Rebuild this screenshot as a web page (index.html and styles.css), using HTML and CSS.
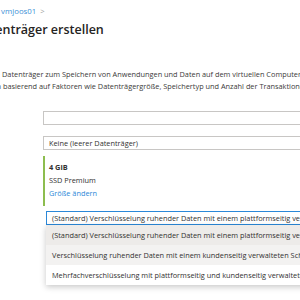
FILE: index.html
```
<html>
<head>
    <meta charset="utf-8">
    <link rel="stylesheet" href="styles.css">
</head>
<body>
    <div class="page">
        <div class="crumbs">
            <span class="crumb-hidden">Startseite <span class="chev">&gt;</span> </span><a class="crumb">vmjoos01</a> <span class="chev">&gt;</span>
        </div>
        <h1 class="title">Datenträger erstellen</h1>

        <p class="desc line1">Datenträger zum Speichern von Anwendungen und Daten auf dem virtuellen Computer verwenden.</p>
        <p class="desc line2">Die Kosten variieren basierend auf Faktoren wie Datenträgergröße, Speichertyp und Anzahl der Transaktionen.</p>

        <div class="form">
            <div class="field"></div>
            <div class="field select">Keine (leerer Datenträger)</div>

            <div class="size">
                <div class="size-value">4 GiB</div>
                <div class="size-type">SSD Premium</div>
                <a class="size-link">Größe ändern</a>
            </div>

            <div class="dropdown">
                <div class="dropdown-box">(Standard) Verschlüsselung ruhender Daten mit einem plattformseitig verwalteten Schlüssel</div>
                <ul class="dropdown-list">
                    <li class="option selected">(Standard) Verschlüsselung ruhender Daten mit einem plattformseitig verwalteten Schlüssel</li>
                    <li class="option hover">Verschlüsselung ruhender Daten mit einem kundenseitig verwalteten Schlüssel</li>
                    <li class="option">Mehrfachverschlüsselung mit plattformseitig und kundenseitig verwalteten Schlüsseln</li>
                </ul>
            </div>
        </div>
    </div>
</body>
</html>
```

FILE: styles.css
```
body {
    margin: 0;
    background: #fff;
    overflow: hidden;
    font-family: "Open Sans", "Noto Sans", sans-serif;
    color: #323130;
}

.page {
    width: 300px;
    white-space: nowrap;
}

.crumbs {
    padding-top: 5px;
    height: 12px;
    font-size: 7.8px;
    line-height: 12px;
    color: #8a8886;
    text-indent: -44px;
}

.crumb {
    color: #3a8fd6;
}

.chev {
    color: #a19f9d;
    margin-left: 2px;
}

.title {
    margin: 4px 0 0 0;
    font-size: 12.5px;
    line-height: 18px;
    font-weight: 600;
    color: #252423;
    text-indent: -26px;
}

.desc {
    margin: 0;
    font-size: 7.35px;
    line-height: 12px;
    color: #3b3a39;
}

.line1 {
    margin-top: 29px;
    text-indent: 2px;
}

.line2 {
    text-indent: -68px;
}

.form {
    margin-top: 19px;
    margin-left: 43px;
    width: 300px;
}

.field {
    height: 12px;
    border: 1px solid #c8c6c4;
    font-size: 7.35px;
    line-height: 12px;
    padding-left: 5px;
    color: #323130;
}

.field + .field {
    margin-top: 11px;
}

.size {
    margin-top: 6px;
    border-left: 2px solid #8dbd4f;
    padding: 5px 0 6px 4px;
    font-size: 7.35px;
    line-height: 13px;
}

.size-value {
    font-weight: 700;
}

.size-link {
    color: #2b88d8;
}

.dropdown {
    margin-top: 5px;
    margin-left: 3px;
}

.dropdown-box {
    height: 12px;
    border: 1px solid #2b88d8;
    padding-left: 5px;
    font-size: 7.35px;
    line-height: 12px;
}

.dropdown-list {
    list-style: none;
    margin: 0;
    padding: 0;
    background: #fff;
    box-shadow: 0 2px 6px rgba(0, 0, 0, 0.22);
}

.option {
    height: 20px;
    line-height: 20px;
    padding-left: 6px;
    font-size: 7.35px;
    color: #323130;
}

.option.selected {
    background: #edebe9;
}

.option.hover {
    background: #f3f2f1;
}
```
